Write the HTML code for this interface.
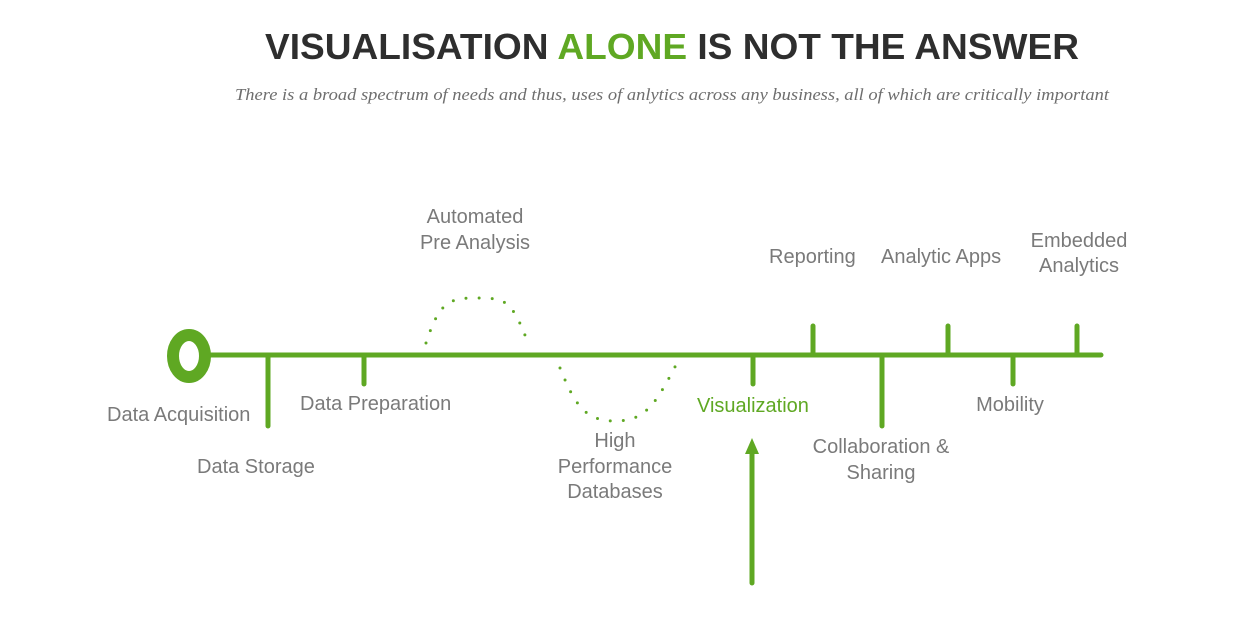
<!DOCTYPE html>
<html><head><style>
html,body{margin:0;padding:0;background:#fff;width:1249px;height:630px;overflow:hidden}
svg{display:block}
.l{font-family:"Liberation Sans",Arial,sans-serif;font-size:20px;fill:#7a7a7a}
</style></head><body>
<svg width="1249" height="630" viewBox="0 0 1249 630" xmlns="http://www.w3.org/2000/svg">
<text x="265" y="59" textLength="814" lengthAdjust="spacingAndGlyphs" font-family="Liberation Sans,Arial,sans-serif" font-weight="bold" font-size="36" fill="#2e2e2e">VISUALISATION <tspan fill="#5fa823">ALONE</tspan> IS NOT THE ANSWER</text>
<text x="235" y="100" textLength="874" lengthAdjust="spacingAndGlyphs" font-family="Liberation Serif,serif" font-style="italic" font-size="17" fill="#6e6e6e">There is a broad spectrum of needs and thus, uses of anlytics across any business, all of which are critically important</text>
<g stroke="#5fa823" stroke-width="5" stroke-linecap="round" fill="none">
<line x1="205" y1="355" x2="1101" y2="355"/>
<line x1="268" y1="355" x2="268" y2="426"/>
<line x1="364" y1="355" x2="364" y2="384"/>
<line x1="753" y1="355" x2="753" y2="384"/>
<line x1="813" y1="355" x2="813" y2="326"/>
<line x1="882" y1="355" x2="882" y2="426"/>
<line x1="948" y1="355" x2="948" y2="326"/>
<line x1="1013" y1="355" x2="1013" y2="384"/>
<line x1="1077" y1="355" x2="1077" y2="326"/>
<line x1="752" y1="583" x2="752" y2="452"/>
</g>
<polygon points="752,438 745,454 759,454" fill="#5fa823"/>
<ellipse cx="189" cy="356" rx="16" ry="21" fill="none" stroke="#5fa823" stroke-width="12"/>
<g fill="none" stroke="#5fa823" stroke-width="3" stroke-linecap="round" stroke-dasharray="0 13">
<path d="M426 343 C440 300 450 298 478 298 C505 298 512 300 528 343"/>
<path d="M560 368 C575 405 585 421 615 421 C645 421 655 405 676 365"/>
</g>
<text class="l" x="107" y="421">Data Acquisition</text>
<text class="l" x="197" y="473">Data Storage</text>
<text class="l" x="300" y="410">Data Preparation</text>
<text class="l" x="475" y="223" text-anchor="middle">Automated</text>
<text class="l" x="475" y="249" text-anchor="middle">Pre Analysis</text>
<text class="l" x="615" y="447" text-anchor="middle">High</text>
<text class="l" x="615" y="473" text-anchor="middle">Performance</text>
<text class="l" x="615" y="498" text-anchor="middle">Databases</text>
<text class="l" x="697" y="412" style="fill:#5fa823">Visualization</text>
<text class="l" x="769" y="263">Reporting</text>
<text class="l" x="881" y="263">Analytic Apps</text>
<text class="l" x="1079" y="247" text-anchor="middle">Embedded</text>
<text class="l" x="1079" y="272" text-anchor="middle">Analytics</text>
<text class="l" x="881" y="453" text-anchor="middle">Collaboration &amp;</text>
<text class="l" x="881" y="479" text-anchor="middle">Sharing</text>
<text class="l" x="1010" y="411" text-anchor="middle">Mobility</text>
</svg>
</body></html>
